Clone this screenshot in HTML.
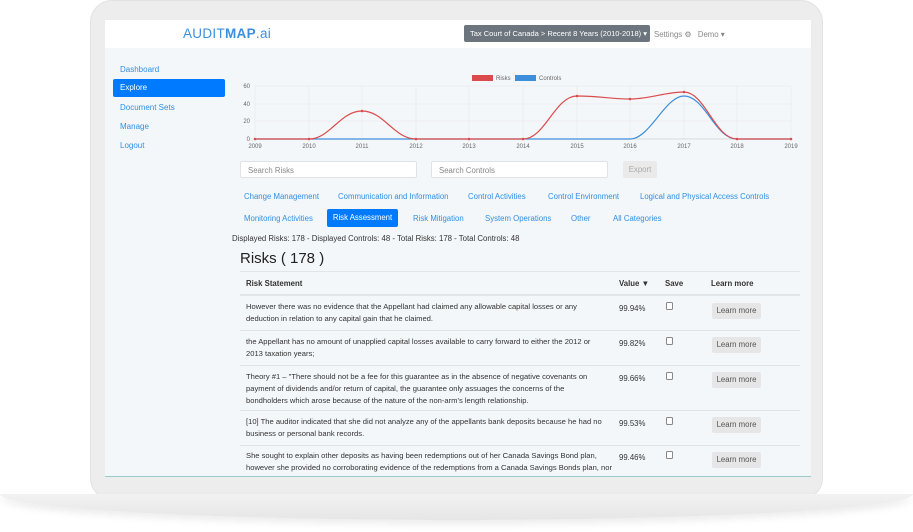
<!DOCTYPE html>
<html><head><meta charset="utf-8"><style>
*{box-sizing:border-box;margin:0;padding:0}
body{width:913px;height:532px;background:#fff;position:relative;overflow:hidden;font-family:"Liberation Sans",sans-serif;color:#333}
.a{position:absolute}
.lap{left:90px;top:0;width:733px;height:500px;background:#ededed;border-radius:22px;border:1px solid #e2e2e2}
.base{left:0;top:494px;width:913px;height:26px;background:linear-gradient(#f2f2f2,#e6e6e6);border-radius:0 0 50% 50%/0 0 100% 100%;box-shadow:0 4px 8px rgba(0,0,0,.08)}
.scr{left:105px;top:20px;width:706px;height:457px;background:#f4f7fa;overflow:hidden}
.hdr{left:0;top:0;width:706px;height:28px;background:#fff}
.t{font-size:7.8px;white-space:nowrap}
.lnk{color:#2f8fe6}
.nav{font-size:8px;color:#2f8fe6}
.in{background:#fff;border:1px solid #e0e3e6;border-radius:2px;height:17px;font-size:7.8px;color:#888;padding:4px 7px}
.row{border-top:1px solid #e2e5e8}
.btn{background:#e6e6e6;color:#555;font-size:7.8px;border-radius:2px;width:49px;height:16px;text-align:center;line-height:16px}
.cb{width:7px;height:8px;border:1px solid #888;border-radius:1.5px;background:#fff}
.tx{font-size:7.6px;line-height:12px;color:#333;width:362px}
</style></head><body>
<div class="a lap"></div>
<div class="a base"></div>
<div class="a scr">
 <div class="a hdr">
  <div class="a" style="left:78px;top:6px;font-size:13.5px;color:#3d8fdc;letter-spacing:.3px">AUDIT<b>MAP</b>.ai</div>
  <div class="a" style="left:359px;top:5px;width:186px;height:17px;background:#6c757d;border-radius:2px;color:#fff;font-size:7.5px;line-height:17px;padding-left:6px">Tax Court of Canada &gt; Recent 8 Years (2010-2018) &#9662;</div>
  <div class="a t" style="left:549px;top:10px;color:#888">Settings &#9881;&nbsp;&nbsp;&nbsp;Demo &#9662;</div>
 </div>
 <div class="a nav" style="left:15px;top:45px">Dashboard</div>
 <div class="a" style="left:8px;top:59px;width:112px;height:18px;background:#007bff;border-radius:2px;color:#fff;font-size:8px;line-height:18px;padding-left:7px">Explore</div>
 <div class="a nav" style="left:15px;top:83px">Document Sets</div>
 <div class="a nav" style="left:15px;top:102px">Manage</div>
 <div class="a nav" style="left:15px;top:121px">Logout</div>
</div>
<svg class="a" style="left:0;top:0" width="913" height="160" font-family="Liberation Sans" font-size="6" fill="#666">
 <rect x="472" y="75" width="21" height="6" fill="#dc4b4b"/><text x="496" y="80">Risks</text>
 <rect x="515" y="75" width="21" height="6" fill="#3d8fdc"/><text x="539" y="80">Controls</text>
 <g stroke="#e4e6e8" stroke-width=".6">
  <line x1="255" y1="86" x2="791" y2="86"/><line x1="255" y1="104" x2="791" y2="104"/><line x1="255" y1="121" x2="791" y2="121"/>
  <line x1="255" y1="86" x2="255" y2="139"/><line x1="309" y1="86" x2="309" y2="139"/><line x1="362" y1="86" x2="362" y2="139"/><line x1="416" y1="86" x2="416" y2="139"/><line x1="469" y1="86" x2="469" y2="139"/><line x1="523" y1="86" x2="523" y2="139"/><line x1="577" y1="86" x2="577" y2="139"/><line x1="630" y1="86" x2="630" y2="139"/><line x1="684" y1="86" x2="684" y2="139"/><line x1="737" y1="86" x2="737" y2="139"/><line x1="791" y1="86" x2="791" y2="139"/>
 </g>
 <line x1="255" y1="139" x2="791" y2="139" stroke="#bbb" stroke-width=".6"/>
 <g text-anchor="end"><text x="250" y="88">60</text><text x="250" y="106">40</text><text x="250" y="123">20</text><text x="250" y="141">0</text></g>
 <g text-anchor="middle"><text x="255" y="148">2009</text><text x="309" y="148">2010</text><text x="362" y="148">2011</text><text x="416" y="148">2012</text><text x="469" y="148">2013</text><text x="523" y="148">2014</text><text x="577" y="148">2015</text><text x="630" y="148">2016</text><text x="684" y="148">2017</text><text x="737" y="148">2018</text><text x="791" y="148">2019</text></g>
 <path d="M255 139 L630 139 C650 139 665 96 684 96 C705 96 715 139 737 139 L791 139" stroke="#3d8fdc" stroke-width="1.2" fill="none"/>
 <path d="M255 139 L309 139 C330 139 340 111 362 111 C384 111 394 139 416 139 L523 139 C545 139 555 96 577 96 C600 96 610 99 630 99 C650 99 665 92 684 92 C705 92 715 139 737 139 L791 139" stroke="#dc4b4b" stroke-width="1.2" fill="none"/>
 <g fill="#dc4b4b"><circle cx="255" cy="139" r="1.3"/><circle cx="309" cy="139" r="1.3"/><circle cx="362" cy="111" r="1.3"/><circle cx="416" cy="139" r="1.3"/><circle cx="469" cy="139" r="1.3"/><circle cx="523" cy="139" r="1.3"/><circle cx="577" cy="96" r="1.3"/><circle cx="630" cy="99" r="1.3"/><circle cx="684" cy="92" r="1.3"/><circle cx="737" cy="139" r="1.3"/><circle cx="791" cy="139" r="1.3"/></g>
</svg>
<div class="a in" style="left:240px;top:161px;width:177px">Search Risks</div>
<div class="a in" style="left:431px;top:161px;width:177px">Search Controls</div>
<div class="a" style="left:623px;top:161px;width:34px;height:17px;background:#eaeaea;border-radius:2px;color:#aaa;font-size:7.8px;line-height:17px;text-align:center">Export</div>
<div class="a t lnk" style="left:244px;top:192px">Change Management</div>
<div class="a t lnk" style="left:338px;top:192px">Communication and Information</div>
<div class="a t lnk" style="left:468px;top:192px">Control Activities</div>
<div class="a t lnk" style="left:548px;top:192px">Control Environment</div>
<div class="a t lnk" style="left:640px;top:192px">Logical and Physical Access Controls</div>
<div class="a t lnk" style="left:244px;top:214px">Monitoring Activities</div>
<div class="a" style="left:327px;top:209px;width:71px;height:18px;background:#007bff;border-radius:2px;color:#fff;font-size:7.8px;line-height:18px;text-align:center">Risk Assessment</div>
<div class="a t lnk" style="left:413px;top:214px">Risk Mitigation</div>
<div class="a t lnk" style="left:485px;top:214px">System Operations</div>
<div class="a t lnk" style="left:571px;top:214px">Other</div>
<div class="a t lnk" style="left:613px;top:214px">All Categories</div>
<div class="a t" style="left:232px;top:234px;color:#333">Displayed Risks: 178 - Displayed Controls: 48 - Total Risks: 178 - Total Controls: 48</div>
<div class="a" style="left:240px;top:250px;font-size:15px;color:#222">Risks ( 178 )</div>
<div class="a row" style="left:240px;top:271px;width:560px"></div>
<div class="a t" style="left:246px;top:279px;font-weight:bold">Risk Statement</div>
<div class="a t" style="left:619px;top:279px;font-weight:bold">Value &#9660;</div>
<div class="a t" style="left:665px;top:279px;font-weight:bold">Save</div>
<div class="a t" style="left:711px;top:279px;font-weight:bold">Learn more</div>
<div class="a row" style="left:240px;top:294px;width:560px;border-top-width:2px"></div>

<div class="a tx" style="left:246px;top:301px">However there was no evidence that the Appellant had claimed any allowable capital losses or any deduction in relation to any capital gain that he claimed.</div>
<div class="a t" style="left:619px;top:304px">99.94%</div><div class="a cb" style="left:666px;top:302px"></div><div class="a btn" style="left:712px;top:303px">Learn more</div>
<div class="a row" style="left:240px;top:330px;width:560px"></div>
<div class="a tx" style="left:246px;top:336px">the Appellant has no amount of unapplied capital losses available to carry forward to either the 2012 or 2013 taxation years;</div>
<div class="a t" style="left:619px;top:339px">99.82%</div><div class="a cb" style="left:666px;top:337px"></div><div class="a btn" style="left:712px;top:337px">Learn more</div>
<div class="a row" style="left:240px;top:365px;width:560px"></div>
<div class="a tx" style="left:246px;top:371px">Theory #1 – "There should not be a fee for this guarantee as in the absence of negative covenants on payment of dividends and/or return of capital, the guarantee only assuages the concerns of the bondholders which arose because of the nature of the non-arm's length relationship.</div>
<div class="a t" style="left:619px;top:374px">99.66%</div><div class="a cb" style="left:666px;top:372px"></div><div class="a btn" style="left:712px;top:372px">Learn more</div>
<div class="a row" style="left:240px;top:410px;width:560px"></div>
<div class="a tx" style="left:246px;top:416px">[10] The auditor indicated that she did not analyze any of the appellants bank deposits because he had no business or personal bank records.</div>
<div class="a t" style="left:619px;top:419px">99.53%</div><div class="a cb" style="left:666px;top:417px"></div><div class="a btn" style="left:712px;top:417px">Learn more</div>
<div class="a row" style="left:240px;top:445px;width:560px"></div>
<div class="a" style="left:240px;top:446px;width:571px;height:30px;overflow:hidden">
<div class="a tx" style="left:6px;top:4px;width:372px">She sought to explain other deposits as having been redemptions out of her Canada Savings Bond plan, however she provided no corroborating evidence of the redemptions from a Canada Savings Bonds plan, nor</div>
</div>
<div class="a t" style="left:619px;top:453px">99.46%</div><div class="a cb" style="left:666px;top:451px"></div><div class="a btn" style="left:712px;top:452px">Learn more</div>
<div class="a" style="left:105px;top:476px;width:706px;height:1px;background:#9cc"></div>
</body></html>
